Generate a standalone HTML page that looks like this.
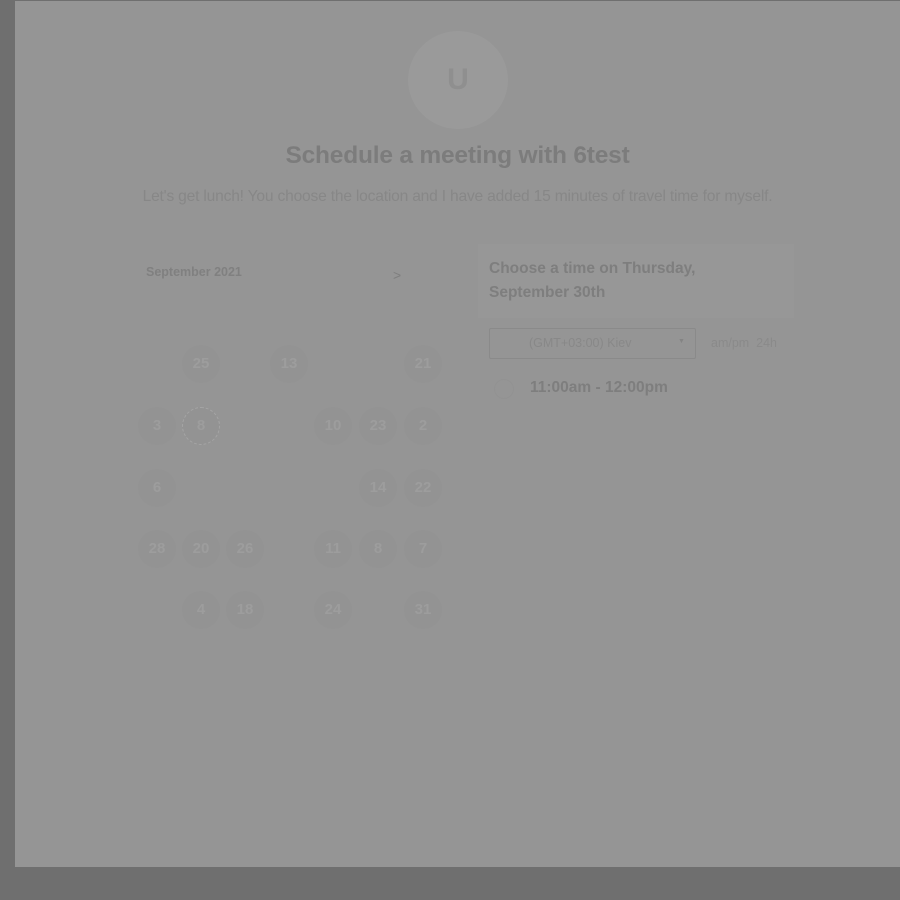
<!DOCTYPE html>
<html><head><style>
body{margin:0;width:900px;height:900px;background:#6f6f6f;position:relative;overflow:hidden;font-family:"Liberation Sans",sans-serif}
.panel{position:absolute;left:15px;top:1px;width:885px;height:866px;background:#959595}
.av{position:absolute;left:408px;top:31px;width:100px;height:98px;border-radius:50%;background:#9a9a9a;color:#8f8f8f;font-size:30px;font-weight:bold;text-align:center;line-height:98px}
h1{position:absolute;top:142px;left:0;width:915px;margin:0;text-align:center;font-size:24.5px;color:#7c7c7c;font-weight:bold;letter-spacing:-0.2px}
.sub{position:absolute;top:188px;left:0;width:915px;text-align:center;font-size:15.6px;color:#878787;letter-spacing:-0.2px}
.c{position:absolute;width:38px;height:38px;border-radius:50%;background:#939393;color:#9d9d9d;font-size:15px;font-weight:bold;text-align:center;line-height:38px}
.box{position:absolute;left:478px;top:244px;width:316px;height:74px;background:#979797}
</style></head><body>
<div class="panel"></div>
<div class="av">U</div>
<h1>Schedule a meeting with 6test</h1>
<div class="sub">Let's get lunch! You choose the location and I have added 15 minutes of travel time for myself.</div>
<div style="position:absolute;left:146px;top:265px;font-size:12.5px;font-weight:bold;color:#808080">September 2021</div>
<div style="position:absolute;left:393px;top:267px;font-size:14px;color:#7e7e7e">&gt;</div>
<div class="c" style="left:182px;top:345px">25</div>
<div class="c" style="left:270px;top:345px">13</div>
<div class="c" style="left:404px;top:345px">21</div>
<div class="c" style="left:138px;top:407px">3</div>
<div class="c" style="left:182px;top:407px;border:1px dashed #a5a5a5;width:36px;height:36px;line-height:36px">8</div>
<div class="c" style="left:314px;top:407px">10</div>
<div class="c" style="left:359px;top:407px">23</div>
<div class="c" style="left:404px;top:407px">2</div>
<div class="c" style="left:138px;top:469px">6</div>
<div class="c" style="left:359px;top:469px">14</div>
<div class="c" style="left:404px;top:469px">22</div>
<div class="c" style="left:138px;top:530px">28</div>
<div class="c" style="left:182px;top:530px">20</div>
<div class="c" style="left:226px;top:530px">26</div>
<div class="c" style="left:314px;top:530px">11</div>
<div class="c" style="left:359px;top:530px">8</div>
<div class="c" style="left:404px;top:530px">7</div>
<div class="c" style="left:182px;top:591px">4</div>
<div class="c" style="left:226px;top:591px">18</div>
<div class="c" style="left:314px;top:591px">24</div>
<div class="c" style="left:404px;top:591px">31</div>
<div class="box"></div>
<div style="position:absolute;left:489px;top:257px;font-size:15.5px;font-weight:bold;color:#7e7e7e;line-height:24px">Choose a time on Thursday,<br>September 30th</div>
<div style="position:absolute;left:489px;top:328px;width:207px;height:31px;border:1px solid #8a8a8a;border-radius:2px;box-sizing:border-box"></div>
<div style="position:absolute;left:529px;top:336px;font-size:12.5px;color:#888">(GMT+03:00) Kiev</div>
<div style="position:absolute;left:678px;top:338px;font-size:7px;color:#848484">▼</div>
<div style="position:absolute;left:711px;top:336px;font-size:12.5px;color:#8a8a8a">am/pm&nbsp; 24h</div>
<div style="position:absolute;left:494px;top:379px;width:20px;height:20px;border-radius:50%;border:1px solid #929292;box-sizing:border-box"></div>
<div style="position:absolute;left:530px;top:379px;font-size:15.5px;font-weight:bold;color:#7e7e7e">11:00am - 12:00pm</div>
</body></html>
